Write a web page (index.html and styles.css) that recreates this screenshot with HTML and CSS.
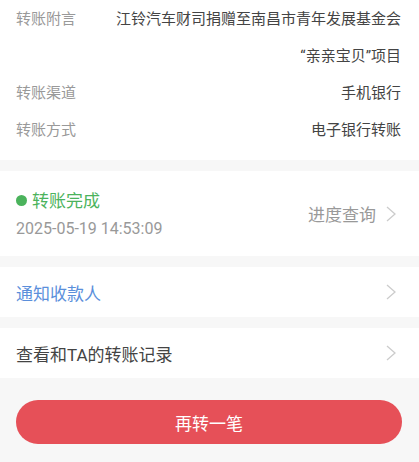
FILE: index.html
```html
<!DOCTYPE html>
<html lang="zh-CN">
<head>
    <meta charset="UTF-8">
    <meta name="viewport" content="width=device-width, initial-scale=1">
    <title>转账详情</title>
    <link rel="stylesheet" href="styles.css">
</head>
<body>
    <dl class="detail">
        <div class="item">
            <dt>转账附言</dt>
            <dd>江铃汽车财司捐赠至南昌市青年发展基金会<br>“亲亲宝贝”项目</dd>
        </div>
        <div class="item">
            <dt>转账渠道</dt>
            <dd>手机银行</dd>
        </div>
        <div class="item">
            <dt>转账方式</dt>
            <dd>电子银行转账</dd>
        </div>
    </dl>

    <!-- 转账状态 -->
    <div class="row status">
        <div>
            <p class="state">转账完成</p>
            <p class="time">2025-05-19 14:53:09</p>
        </div>
        <a class="query" href="#">进度查询
            <svg class="arrow" viewBox="0 0 10 16"><path d="M1 1l8 7-8 7"/></svg>
        </a>
    </div>

    <a class="row notice" href="#">通知收款人
        <svg class="arrow" viewBox="0 0 10 16"><path d="M1 1l8 7-8 7"/></svg>
    </a>

    <a class="row" href="#">查看和TA的转账记录
        <svg class="arrow" viewBox="0 0 10 16"><path d="M1 1l8 7-8 7"/></svg>
    </a>

    <div class="footer">
        <button class="btn" type="button">再转一笔</button>
    </div>
</body>
</html>
```

FILE: styles.css
```css
body {
    margin: 0;
    background: #f7f7f7;
    color: #444;
    font-family: Roboto, "Noto Sans CJK SC", sans-serif;
    font-size: 17px;
}
a {
    color: inherit;
    text-decoration: none;
}
p, dl, dd {
    margin: 0;
}

.detail {
    padding: 1px 18px 11px 16px;
    background: #fff;
    font-size: 15px;
    line-height: 37px;
}
.item {
    display: flex;
    justify-content: space-between;
}
.item dt {
    color: #999;
}
.item dd {
    text-align: right;
}

.row {
    display: flex;
    align-items: center;
    justify-content: space-between;
    min-height: 50px;
    margin-top: 11px;
    padding: 0 23px 0 16px;
    background: #fff;
}
.status {
    min-height: 85px;
}
.state {
    display: flex;
    align-items: center;
    gap: 5px;
    color: #4bb35c;
    line-height: 30px;
}
.state::before {
    content: "";
    width: 11px;
    height: 11px;
    border-radius: 50%;
    background: #4bb35c;
}
.time {
    color: #999;
    font-size: 16px;
    line-height: 26px;
}
.query {
    display: flex;
    align-items: center;
    gap: 10px;
    color: #999;
}
.notice {
    color: #5b8fdb;
}
.arrow {
    width: 10px;
    height: 16px;
    fill: none;
    stroke: #ccc;
    stroke-width: 1.3;
}

.footer {
    padding: 22px 17px 17px 16px;
}
.btn {
    display: block;
    width: 100%;
    height: 44px;
    border: 0;
    border-radius: 22px;
    background: #e65058;
    color: #fff;
    font-family: inherit;
    font-size: 17px;
}
```
